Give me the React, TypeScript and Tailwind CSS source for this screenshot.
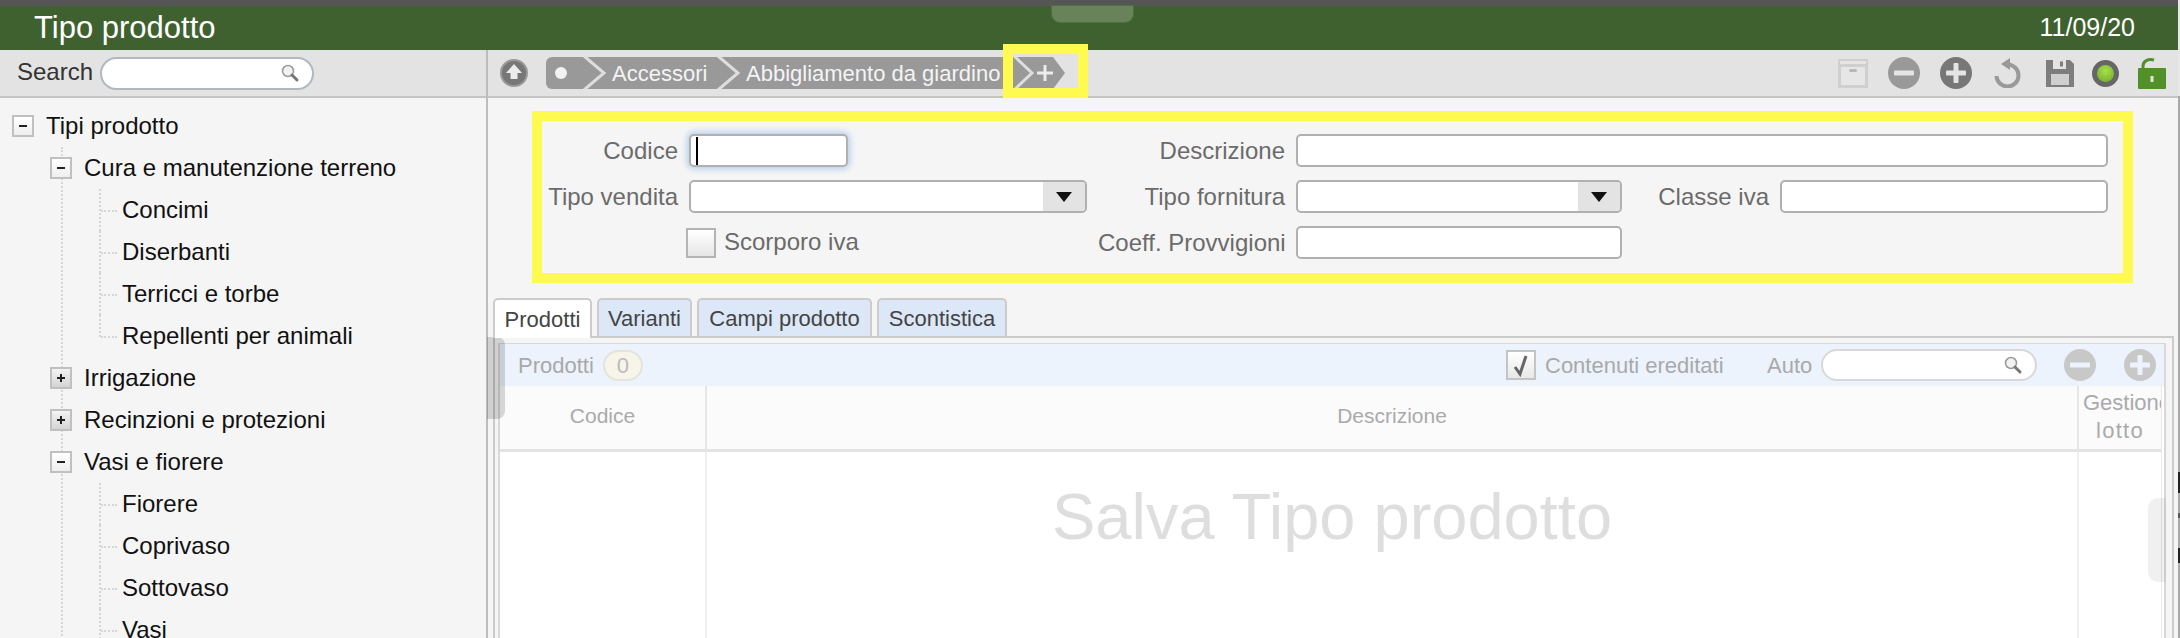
function Search({ className }: { className: string }) {
  return (
    <div className={`flex items-center justify-end rounded-full border-2 bg-white pr-3 ${className}`}>
      <svg width="20" height="20" viewBox="0 0 20 20">
        <circle cx="8" cy="8" r="5.5" fill="#f2f2f2" stroke="#999" strokeWidth="1.5" />
        <path d="M12 12l5 5" stroke="#777" strokeWidth="3" strokeLinecap="round" />
      </svg>
    </div>
  );
}

function RoundIcon({ plus, color, size = 32, bar = "#e4e4e4" }: { plus?: boolean; color: string; size?: number; bar?: string }) {
  return (
    <svg width={size} height={size} viewBox="0 0 32 32" className="shrink-0">
      <circle cx="16" cy="16" r="16" fill={color} />
      <rect x="6" y="13.5" width="20" height="5" rx="1" fill={bar} />
      {plus && <rect x="13.5" y="6" width="5" height="20" rx="1" fill={bar} />}
    </svg>
  );
}

function Toolbar() {
  return (
    <div className="relative flex h-12 items-center border-b-2 border-[#c4c4c4] bg-[#e3e3e3] pl-3 pr-3">
      <svg width="28" height="30" viewBox="0 0 28 30" className="shrink-0">
        <circle cx="14" cy="15" r="13" fill="#777" stroke="#999" strokeWidth="2" />
        <path d="M14 6l8 9h-4.500v6h-7v-6H6z" fill="#ececec" />
      </svg>
      <div className="ml-[18px] flex h-8 items-center">
        <div className="flex h-8 items-center rounded-l-[6px] bg-[#999] text-[22px] text-[#f4f4f4]">
          <span className="ml-[9px] mr-[16px] size-[12px] rounded-full bg-[#f2f2f2]" />
          <svg width="24" height="32" viewBox="0 0 24 32" className="shrink-0">
            <path d="M1 -1L21 16L1 33" fill="none" stroke="#dedede" strokeWidth="3" />
          </svg>
          <span className="ml-[5px] w-[95px] whitespace-nowrap">Accessori</span>
          <svg width="24" height="32" viewBox="0 0 24 32" className="ml-[10px] shrink-0">
            <path d="M1 -1L21 16L1 33" fill="none" stroke="#dedede" strokeWidth="3" />
          </svg>
          <span className="ml-[5px] w-[253px] whitespace-nowrap">Abbigliamento da giardino</span>
          <svg width="24" height="32" viewBox="0 0 24 32" className="ml-[14px] shrink-0">
            <path d="M1 -1L19 16L1 33" fill="none" stroke="#dedede" strokeWidth="3" />
          </svg>
          <svg width="16" height="16" viewBox="0 0 16 16" className="shrink-0">
            <path d="M0 8h16M8 0v16" stroke="#ececec" strokeWidth="3" />
          </svg>
        </div>
        <svg width="12" height="32" viewBox="0 0 12 32" className="shrink-0">
          <path d="M0 0L12 16L0 32z" fill="#999" />
        </svg>
      </div>

      <div className="ml-auto flex items-center">
        <svg width="30" height="29" viewBox="0 0 30 29" className="shrink-0">
          <rect width="30" height="29" fill="#cfcfcf" />
          <rect x="2" y="2" width="26" height="3" fill="#e6e6e6" />
          <rect x="3" y="8" width="24" height="18" fill="#e6e6e6" />
          <rect x="11" y="10" width="8" height="3" rx="1.500" fill="#b8b8b8" />
        </svg>
        <div className="ml-5"><RoundIcon color="#999" /></div>
        <div className="ml-5"><RoundIcon plus color="#777" /></div>
        <svg width="30" height="30" viewBox="0 0 30 30" className="ml-[21px] shrink-0">
          <path d="M15 6.500A11 11 0 1 1 3.500 18" fill="none" stroke="#999" strokeWidth="4" />
          <path d="M17 0v12L8 6z" fill="#999" />
        </svg>
        <svg width="28" height="28" viewBox="0 0 28 28" className="ml-[23px] shrink-0">
          <path d="M0 1h24l4 4v23H0z" fill="#7d7d7d" />
          <rect x="7" y="1" width="13" height="9" fill="#e3e3e3" />
          <rect x="14" y="2.500" width="3" height="5" fill="#7d7d7d" />
          <rect x="5" y="15" width="18" height="11" fill="#cfcfcf" />
        </svg>
        <div className="ml-[18px] flex size-[27px] items-center justify-center rounded-full bg-[#666]">
          <span className="size-[17px] rounded-full bg-[radial-gradient(circle_at_50%_35%,#a8e04a,#6aa82a)]" />
        </div>
        <svg width="28" height="32" viewBox="0 0 28 32" className="ml-[19px] shrink-0">
          <path d="M5 13V9C5 4 10 1.500 16 3" fill="none" stroke="#52902a" strokeWidth="3" />
          <rect y="11" width="28" height="21" rx="1" fill="#52902a" />
          <rect x="12.500" y="19" width="3" height="6" fill="#dbe8cf" />
        </svg>
      </div>

      <div className="absolute left-[515px] top-[-6px] h-[54px] w-[85px] border-[10px] border-[#fffa50]" />
    </div>
  );
}

function Box({ open }: { open?: boolean }) {
  return (
    <span className={`relative z-10 flex size-[22px] shrink-0 items-center justify-center border-2 border-[#c0c0c0] bg-linear-to-b ${open ? "from-white to-[#eeeeee]" : "from-[#f4f4f4] to-[#d4d4d4]"}`}>
      <svg width="10" height="10" viewBox="0 0 10 10">
        <path d={open ? "M1 5h8" : "M1 5h8M5 1v8"} stroke="#222" strokeWidth="2" />
      </svg>
    </span>
  );
}

function Leaves({ items, cut }: { items: string[]; cut?: boolean }) {
  return (
    <ul className="ml-[36px]">
      {items.map((name, i) => (
        <li key={name} className="flex h-[42px] text-[24px] text-[#111]">
          <span className={`border-l-2 border-dotted border-[#d6d6d6] ${cut && i === items.length - 1 ? "h-[22px]" : "h-full"}`} />
          <span className="mt-[21px] h-0 w-[16px] border-t-2 border-dotted border-[#d6d6d6]" />
          <span className="ml-[5px] self-center whitespace-nowrap">{name}</span>
        </li>
      ))}
    </ul>
  );
}

function Branch({ name, open }: { name: string; open?: boolean }) {
  return (
    <li className="-ml-[13px] flex h-[42px] items-center text-[24px] text-[#111]">
      <Box open={open} />
      <span className="ml-3 whitespace-nowrap">{name}</span>
    </li>
  );
}

function Sidebar() {
  return (
    <aside className="flex w-[488px] shrink-0 flex-col overflow-hidden border-r-2 border-[#bdbdbd] bg-[#f5f5f5]">
      <div className="flex h-12 shrink-0 items-center border-b-2 border-[#c4c4c4] bg-[#e3e3e3] pl-[17px]">
        <span className="w-[83px] pb-[2px] text-[24px] text-[#333]">Search</span>
        <Search className="h-[33px] w-[214px] border-[#b0b8c0]" />
      </div>
      <div className="pl-3 pt-[7px]">
        <div className="flex h-[42px] items-center text-[24px] text-[#111]">
          <Box open />
          <span className="ml-3">Tipi prodotto</span>
        </div>
        <ul className="ml-[49px] border-l-2 border-dotted border-[#d6d6d6]">
          <Branch name="Cura e manutenzione terreno" open />
          <Leaves cut items={["Concimi", "Diserbanti", "Terricci e torbe", "Repellenti per animali"]} />
          <Branch name="Irrigazione" />
          <Branch name="Recinzioni e protezioni" />
          <Branch name="Vasi e fiorere" open />
          <Leaves items={["Fiorere", "Coprivaso", "Sottovaso", "Vasi"]} />
        </ul>
      </div>
    </aside>
  );
}

const inputCls = "h-[33px] rounded-[5px] border-2 border-[#b0b0b0] bg-white";

function Label({ children }: { children: string }) {
  return <label className="whitespace-nowrap text-right text-[24px] leading-[33px] text-[#6b6b6b]">{children}</label>;
}

function Select({ className }: { className: string }) {
  return (
    <div className={`flex justify-end overflow-hidden ${inputCls} ${className}`}>
      <div className="flex w-[42px] items-center justify-center bg-[#e3e3e3]">
        <svg width="16" height="10" viewBox="0 0 16 10">
          <path d="M0 0h16L8 10z" fill="#111" />
        </svg>
      </div>
    </div>
  );
}

function Form() {
  return (
    <div className="ml-[44px] mt-[13px] grid h-[172px] w-[1601px] grid-cols-[136px_398px_187px_326px_136px_328px] content-start gap-x-[11px] gap-y-[13px] border-[10px] border-[#fffa50] pt-[13px]">
      <Label>Codice</Label>
      <div className={`flex w-[159px] items-center pl-[5px] shadow-[0_0_6px_2px_#b4cdec] ${inputCls}`}>
        <span className="h-[28px] w-[2px] bg-black" />
      </div>
      <Label>Descrizione</Label>
      <input readOnly className={`col-span-3 w-full ${inputCls}`} />

      <Label>Tipo vendita</Label>
      <Select className="w-full" />
      <Label>Tipo fornitura</Label>
      <Select className="w-full" />
      <Label>Classe iva</Label>
      <input readOnly className={`w-full ${inputCls}`} />

      <span />
      <div className="-ml-[3px] flex h-[33px] items-center">
        <span className="size-[30px] border-2 border-[#b4b4b4] bg-linear-to-b from-white to-[#e6e6e6]" />
        <span className="ml-2 pb-[2px] text-[24px] text-[#6b6b6b]">Scorporo iva</span>
      </div>
      <Label>Coeff. Provvigioni</Label>
      <input readOnly className={`w-full ${inputCls}`} />
    </div>
  );
}

function Tabs() {
  const tabs = [
    { name: "Prodotti", w: "w-[99px]", on: true },
    { name: "Varianti", w: "w-[95px]" },
    { name: "Campi prodotto", w: "w-[175px]" },
    { name: "Scontistica", w: "w-[130px]" },
  ];
  return (
    <div className="relative z-10 ml-[5px] mt-[15px] flex h-[38px] shrink-0 gap-[5px]">
      {tabs.map((t) => (
        <div
          key={t.name}
          className={`flex items-center justify-center rounded-t-[5px] border-2 border-[#cccccc] text-[22px] text-[#444] ${t.w} ${t.on ? "h-[40px] border-b-0 bg-white" : "h-[38px] border-b-0 bg-[#dce7f8]"}`}
        >
          {t.name}
        </div>
      ))}
    </div>
  );
}

function Panel() {
  return (
    <div className="ml-[5px] flex min-h-0 w-[1681px] flex-1 flex-col border-x-2 border-t-2 border-[#cbcbcb] pl-[3px] pr-[6px] pt-[5px]">
      <div className="flex min-h-0 flex-1 flex-col border-x-2 border-t border-[#d8d8d8] bg-white">
        <div className="flex h-[42px] shrink-0 items-center bg-[#ecf3fc] pl-[18px] pr-2 text-[22px] text-[#a9a9a9]">
          <span>Prodotti</span>
          <span className="ml-[9px] flex h-[31px] w-10 items-center justify-center rounded-full border-2 border-[#e4e4dc] bg-[#f7f4e9] text-[#bbb]">0</span>
          <span className="ml-auto flex size-[30px] items-center justify-center border-2 border-[#c4c4c4] bg-linear-to-b from-white to-[#e8e8e8]">
            <svg width="20" height="24" viewBox="0 0 20 24">
              <path d="M4 14l5 7L15 3" fill="none" stroke="#666" strokeWidth="3" />
            </svg>
          </span>
          <span className="ml-[9px] w-[176px] whitespace-nowrap">Contenuti ereditati</span>
          <span className="ml-[46px] w-[45px]">Auto</span>
          <Search className="ml-[9px] h-[32px] w-[216px] border-[#d8d8d8]" />
          <div className="ml-[27px]"><RoundIcon color="#c8c8c8" bar="#ecf3fc" /></div>
          <div className="ml-[28px]"><RoundIcon plus color="#c8c8c8" bar="#ecf3fc" /></div>
        </div>

        <div className="relative flex min-h-0 w-[1662px] flex-1 flex-col border-r border-[#e8e8e8]">
          <div className="grid h-[66px] shrink-0 grid-cols-[207px_1372px_82px] border-b-[3px] border-[#e3e3e3] bg-[#fbfbfb] text-[21px] text-[#aaa]">
            <div className="flex items-center justify-center border-r-2 border-[#e6e6e6] pb-[4px]">Codice</div>
            <div className="flex items-center justify-center border-r-2 border-[#e6e6e6] pb-[4px]">Descrizione</div>
            <div className="overflow-hidden whitespace-nowrap pl-[4px] pt-[3px] text-[22px] leading-[28px]">
              <div className="w-[90px]">Gestione</div>
              <div className="w-[74px] text-center tracking-[1.3px]">lotto</div>
            </div>
          </div>
          <div className="grid flex-1 grid-cols-[207px_1372px_82px]">
            <div className="border-r-2 border-[#f0f0f0]" />
            <div className="border-r-2 border-[#f0f0f0] pr-[120px] pt-[25px] text-center text-[65px] leading-[80px] text-[#dedede]">Salva Tipo prodotto</div>
            <div />
          </div>
        </div>
      </div>
    </div>
  );
}

export default function App() {
  return (
    <div className="relative flex h-[638px] w-[2180px] overflow-hidden bg-[#f5f5f5] font-['Liberation_Sans',Arial,sans-serif]">
      <div className="flex w-[2178px] flex-col">
        <div className="h-[6px] shrink-0 bg-[#555]" />
        <header className="relative flex h-[44px] shrink-0 items-center justify-between bg-[#3f6130] pl-[34px] pr-[43px] text-white">
          <span className="text-[31px]">Tipo prodotto</span>
          <span className="text-[25px]">11/09/20</span>
          <div className="absolute left-[1052px] top-0 h-[16px] w-[81px] rounded-b-[8px] bg-[#688259] shadow-[0_0_0_1px_#4f6e41]" />
        </header>
        <div className="flex min-h-0 flex-1">
          <Sidebar />
          <main className="flex min-w-0 flex-1 flex-col">
            <Toolbar />
            <Form />
            <Tabs />
            <Panel />
          </main>
        </div>
      </div>

      <div className="flex w-[2px] flex-col bg-[#aaa]">
        <div className="h-[96px] bg-[#e8e8e8]" />
        <div className="mt-[376px] h-[21px] bg-[#222]" />
        <div className="mt-[20px] h-[5px] bg-[#555]" />
        <div className="mt-[30px] h-[15px] bg-[#222]" />
      </div>

      {/* overlay scrollbars */}
      <div className="absolute left-[487px] top-[337px] h-[82px] w-[18px] rounded-r-[8px] bg-black/15" />
      <div className="absolute left-[2148px] top-[498px] h-[84px] w-[18px] rounded-l-[10px] bg-black/[0.06]" />
    </div>
  );
}
